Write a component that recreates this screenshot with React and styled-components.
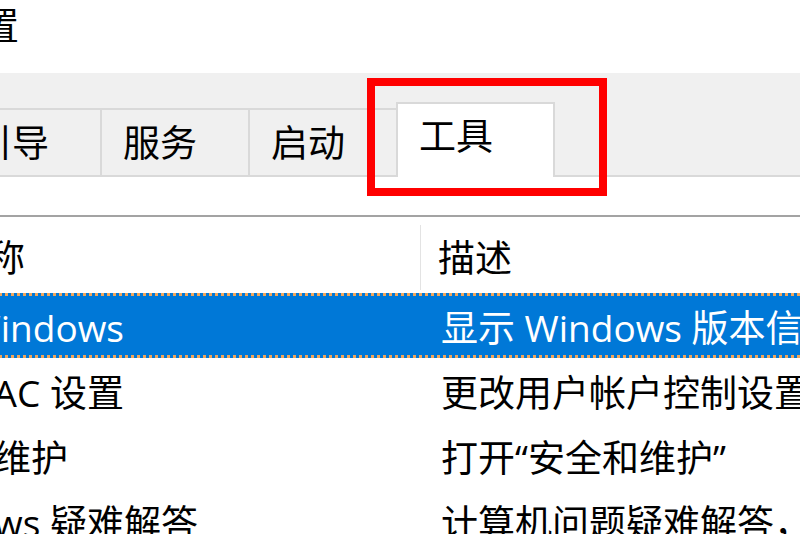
import React from "react";
import styled, { createGlobalStyle } from "styled-components";

const GlobalStyle = createGlobalStyle`
  html, body {
    margin: 0;
    padding: 0;
    background: #ffffff;
    overflow: hidden;
  }
  body {
    font-family: "Open Sans", "Noto Sans CJK SC", sans-serif;
    color: #000000;
  }
`;

const Window = styled.div`
  position: relative;
  width: 800px;
  height: 534px;
  overflow: hidden;
  background: #ffffff;
`;

const TitleBar = styled.div`
  height: 73px;
  box-sizing: border-box;
  padding-top: 7px;
  background: #ffffff;
  white-space: nowrap;
`;

const Title = styled.div`
  margin-left: -129px;
  font-size: 37px;
  line-height: 37px;
`;

const TabStrip = styled.div`
  height: 104px;
  box-sizing: border-box;
  background: #f0f0f0;
  border-bottom: 2px solid #d9d9d9;
  display: flex;
  align-items: flex-end;
`;

const TabList = styled.div`
  display: flex;
  align-items: flex-end;
  margin-left: -194px;
`;

const Tab = styled.div`
  box-sizing: border-box;
  flex: none;
  width: ${(p) => (p.$active ? "159px" : "150px")};
  height: ${(p) => (p.$active ? "75px" : "67px")};
  margin-left: -2px;
  margin-bottom: ${(p) => (p.$active ? "-2px" : "0")};
  padding-left: 21px;
  padding-bottom: ${(p) => (p.$active ? "10px" : "0")};
  background: ${(p) => (p.$active ? "#ffffff" : "#f0f0f0")};
  border: 2px solid #d9d9d9;
  border-bottom: none;
  position: relative;
  z-index: ${(p) => (p.$active ? 1 : 0)};
  display: flex;
  align-items: center;
  font-size: 37px;
  line-height: 37px;
  white-space: nowrap;
`;

const Panel = styled.div`
  padding-top: 38px;
  background: #ffffff;
`;

const ListView = styled.div`
  margin-left: -140px;
  width: 1000px;
  border-top: 2px solid #a3a3a3;
`;

const Row = styled.div`
  display: grid;
  grid-template-columns: 560px 1fr;
  box-sizing: border-box;
  height: ${(p) => (p.$header ? "76px" : "65px")};
  padding-top: ${(p) => (p.$header ? "5px" : "6px")};
  background: ${(p) => (p.$selected ? "#0078d7" : "#ffffff")};
  color: ${(p) => (p.$selected ? "#ffffff" : "#000000")};
  border-top: 3px dotted ${(p) => (p.$selected ? "#f2a65a" : "transparent")};
  border-bottom: 3px dotted ${(p) => (p.$selected ? "#f2a65a" : "transparent")};
`;

const HeaderCell = styled.div`
  display: flex;
  align-items: center;
  padding-left: 17px;
  border-left: ${(p) => (p.$first ? "none" : "1px solid #e3e3e3")};
  font-size: 37px;
  line-height: 37px;
  white-space: nowrap;
  overflow: hidden;
`;

const Cell = styled.div`
  display: flex;
  align-items: center;
  padding-left: ${(p) => (p.$first ? "23px" : "21px")};
  margin-top: -3px;
  font-size: 37px;
  line-height: 37px;
  white-space: nowrap;
  overflow: hidden;
`;

const Highlight = styled.div`
  position: absolute;
  left: 367px;
  top: 78px;
  width: 240px;
  height: 118px;
  box-sizing: border-box;
  border: 8px solid #ff0000;
  z-index: 5;
`;

const tabs = ["常规", "引导", "服务", "启动", "工具"];

const tools = [
  { name: "关于 Windows", desc: "显示 Windows 版本信息" },
  { name: "更改 UAC 设置", desc: "更改用户帐户控制设置" },
  { name: "安全和维护", desc: "打开“安全和维护”" },
  { name: "Windows 疑难解答", desc: "计算机问题疑难解答，并修复问题" },
];

const App = () => {
  return (
    <Window>
      <GlobalStyle />
      <TitleBar>
        <Title>系统配置</Title>
      </TitleBar>
      <TabStrip>
        <TabList>
          {tabs.map((t) => (
            <Tab key={t} $active={t === "工具"}>
              {t}
            </Tab>
          ))}
        </TabList>
      </TabStrip>
      <Panel>
        <ListView>
          <Row $header>
            <HeaderCell $first>工具名称</HeaderCell>
            <HeaderCell>描述</HeaderCell>
          </Row>
          {tools.map((t, i) => (
            <Row key={t.name} $selected={i === 0}>
              <Cell $first>{t.name}</Cell>
              <Cell>{t.desc}</Cell>
            </Row>
          ))}
        </ListView>
      </Panel>
      <Highlight />
    </Window>
  );
};

export default App;
